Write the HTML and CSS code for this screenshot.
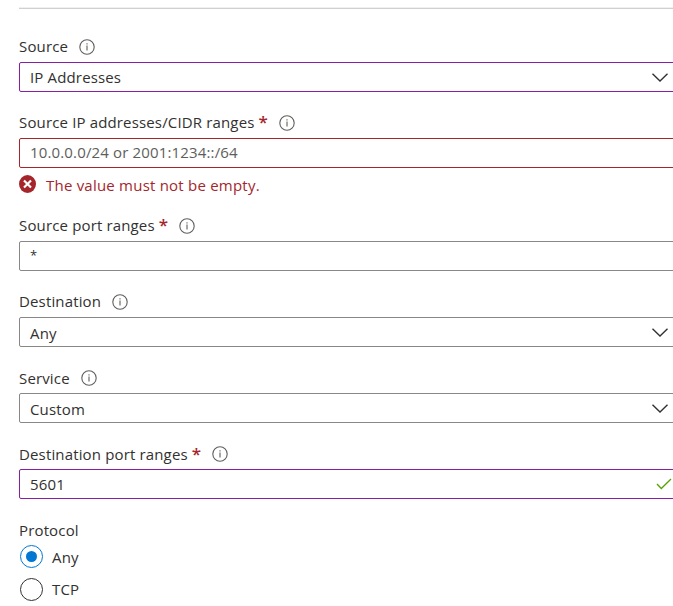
FILE: index.html
```html
<!DOCTYPE html>
<html lang="en">
<head>
<meta charset="utf-8">
<title>Add inbound security rule</title>
<link rel="stylesheet" href="styles.css">
</head>
<body>
<svg class="defs" width="0" height="0">
  <symbol id="info" viewBox="0 0 16 16"><circle cx="8" cy="8" r="7.200" fill="none" stroke="#605e5c" stroke-width="1.100"/><path d="M8 6.500V11.500M8 4.300V5.500" fill="none" stroke="#605e5c" stroke-width="1.100"/></symbol>
  <symbol id="chevron" viewBox="0 0 16 9"><path d="M.5.8 8 8 15.500.8" fill="none" stroke="#323130" stroke-width="1.400"/></symbol>
</svg>
<main class="form">
  <hr class="rule">
  <section class="field">
    <div class="label raised"><span>Source</span><svg class="info"><use href="#info"/></svg></div>
    <div class="box dirty"><span>IP Addresses</span><svg class="chevron"><use href="#chevron"/></svg></div>
  </section>
  <section class="field">
    <div class="label raised"><span>Source IP addresses/CIDR ranges</span><b class="req">*</b><svg class="info"><use href="#info"/></svg></div>
    <div class="box invalid raised"><span class="hint">10.0.0.0/24 or 2001:1234::/64</span></div>
    <div class="error"><svg class="error-icon" viewBox="0 0 17 18"><ellipse cx="8.500" cy="9" rx="8.500" ry="9" fill="#a4262c"/><path d="M5 5.500 12 12.500M12 5.500 5 12.500" stroke="#fff" stroke-width="2.200"/></svg><span>The value must not be empty.</span></div>
  </section>
  <section class="field">
    <div class="label raised"><span>Source port ranges</span><b class="req">*</b><svg class="info"><use href="#info"/></svg></div>
    <div class="box raised"><span class="wildcard">*</span></div>
  </section>
  <section class="field">
    <div class="label raised"><span>Destination</span><svg class="info"><use href="#info"/></svg></div>
    <div class="box low"><span>Any</span><svg class="chevron"><use href="#chevron"/></svg></div>
  </section>
  <section class="field">
    <div class="label"><span>Service</span><svg class="info"><use href="#info"/></svg></div>
    <div class="box low"><span>Custom</span><svg class="chevron"><use href="#chevron"/></svg></div>
  </section>
  <section class="field">
    <div class="label"><span>Destination port ranges</span><b class="req">*</b><svg class="info"><use href="#info"/></svg></div>
    <div class="box dirty"><span>5601</span><svg class="check" viewBox="0 0 16 12"><path d="M1 6 5.300 10.500 15 1" fill="none" stroke="#57a300" stroke-width="1.300"/></svg></div>
  </section>
  <section class="field">
    <div class="label"><span>Protocol</span></div>
    <div class="option low"><i class="radio on"></i><span>Any</span></div>
    <div class="option"><i class="radio"></i><span>TCP</span></div>
  </section>
</main>
</body>
</html>
```
FILE: styles.css
```css
* { box-sizing: border-box; }
body {
  margin: 0;
  height: 606px;
  overflow: hidden;
  background: #fff;
  color: #323130;
  font: 15px/20px "Open Sans", "Noto Sans", sans-serif;
  letter-spacing: 0.15px;
}
.defs { display: block; height: 0; }
.form { padding: 7px 0 0 19px; overflow: hidden; }
.rule {
  height: 2px;
  margin: 0 0 23px;
  border: 0;
  border-top: 1px solid #f0f0f0;
  border-bottom: 1px solid #d0d0d0;
}
.field { margin-bottom: 16px; }
.label { display: flex; align-items: center; height: 30px; }
.label span, .box span, .error span, .option span { flex: none; white-space: nowrap; }
.raised span, .raised .req { padding-bottom: 2px; }
.low span { padding-top: 2px; }
.info { width: 16px; height: 16px; margin-left: 11px; flex: none; }
.req { width: 8px; margin-left: 4px; color: #a4262c; font-size: 17px; font-weight: 600; }
.req + .info { margin-left: 12px; }
.box {
  display: flex;
  align-items: center;
  height: 30px;
  margin-right: -10px;
  padding-left: 10px;
  border: 1px solid #8a8886;
  border-radius: 2px;
}
.box.dirty { border-color: #881fa3; }
.box.invalid { border-color: #a4262c; }
.chevron { width: 16px; height: 9px; margin: 0 14px 0 auto; }
.check { width: 16px; height: 12px; margin: 0 10px 0 auto; }
.error { display: flex; align-items: center; height: 27px; padding-top: 6px; color: #a4262c; letter-spacing: 0.22px; }
.error-icon { width: 17px; height: 18px; margin: -2px 10px 0 0; }
.hint { color: #605e5c; }
.box .wildcard { font-size: 13px; }
.option { display: flex; align-items: center; height: 32px; margin-top: 1px; }
.option:nth-child(2) { margin-top: -5px; }
.radio {
  display: grid;
  place-items: center;
  width: 23px;
  height: 23px;
  margin: 0 9px 0 1px;
  border: 1px solid #323130;
  border-radius: 50%;
}
.radio.on { border-color: #0078d4; }
.radio.on::after { content: ""; width: 11px; height: 11px; border-radius: 50%; background: #0078d4; }
```
